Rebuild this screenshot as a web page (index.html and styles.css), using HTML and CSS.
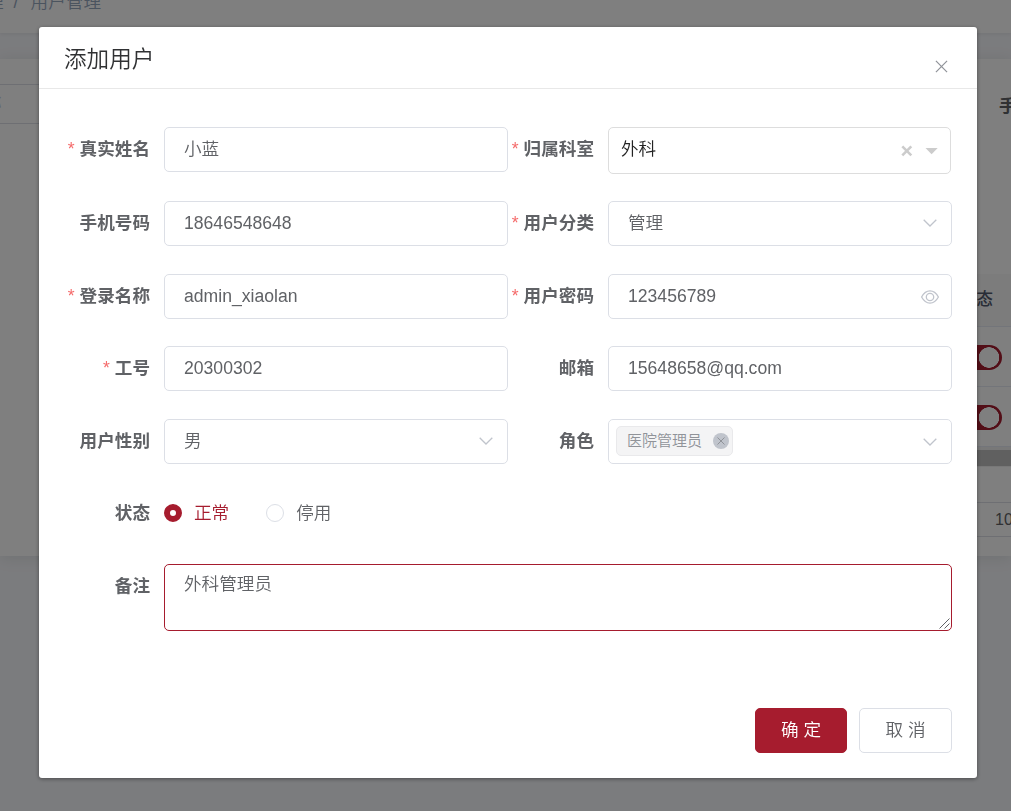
FILE: index.html
```html
<!DOCTYPE html>
<html lang="zh-CN">
<head>
<meta charset="utf-8">
<title>添加用户</title>
<link rel="stylesheet" href="styles.css">
</head>
<body>
<div class="page">
  <header class="navbar"><span class="crumb">理</span><span class="sep">/</span><span class="crumb">用户管理</span></header>
  <main class="card">
    <aside class="tree"><div class="tree-search">称</div></aside>
    <section class="list">
      <div class="filter">手机号码</div>
      <div class="thead">状态</div>
      <div class="trow"><span class="switch"></span></div>
      <div class="trow"><span class="switch"></span></div>
      <div class="scroll"></div>
      <div class="pager"><span class="size">10条/页</span></div>
    </section>
  </main>
</div>
<div class="mask">
  <div class="dialog">
    <div class="dialog-head">
      <h1 class="title">添加用户</h1>
      <svg class="close" viewBox="0 0 14 14"><path d="M1 1l12 12M13 1L1 13"/></svg>
    </div>
    <form class="form">
      <label class="label req">真实姓名</label>
      <div class="input">小蓝</div>
      <label class="label req">归属科室</label>
      <div class="input tree-select">外科
        <svg class="tree-icons" viewBox="0 0 40 14"><path class="x" d="M4.300 2.300l9 9M13.300 2.300l-9 9"/><path class="arrow" d="M27.500 4h12.200l-6.100 6.200z"/></svg>
      </div>

      <label class="label">手机号码</label>
      <div class="input">18646548648</div>
      <label class="label req">用户分类</label>
      <div class="input">管理<svg class="chev" viewBox="0 0 14 8"><path d="M.7.8L7 7l6.300-6.200"/></svg></div>

      <label class="label req">登录名称</label>
      <div class="input">admin_xiaolan</div>
      <label class="label req">用户密码</label>
      <div class="input">123456789<svg class="eye" viewBox="0 0 18 14"><path d="M.6 7C5-1.100 13-1.100 17.400 7 13 15.100 5 15.100.6 7z"/><circle cx="9" cy="7" r="3.700"/></svg></div>

      <label class="label req">工号</label>
      <div class="input">20300302</div>
      <label class="label">邮箱</label>
      <div class="input">15648658@qq.com</div>

      <label class="label">用户性别</label>
      <div class="input">男<svg class="chev" viewBox="0 0 14 8"><path d="M.7.8L7 7l6.300-6.200"/></svg></div>
      <label class="label">角色</label>
      <div class="input multi">
        <span class="tag">医院管理员<svg class="tag-x" viewBox="0 0 16 16"><circle cx="8" cy="8" r="8"/><path d="M4.500 4.500l7 7M11.500 4.500l-7 7"/></svg></span>
        <svg class="chev" viewBox="0 0 14 8"><path d="M.7.8L7 7l6.300-6.200"/></svg>
      </div>

      <label class="label">状态</label>
      <div class="radios">
        <span class="radio on"><i class="dot"></i>正常</span>
        <span class="radio"><i class="dot"></i>停用</span>
      </div>

      <label class="label">备注</label>
      <div class="area">外科管理员<svg class="grip" viewBox="0 0 11 11"><path d="M.5 10.500l10-10M5.500 10.500l5-5"/></svg></div>
    </form>
    <div class="foot">
      <button class="btn primary">确 定</button>
      <button class="btn">取 消</button>
    </div>
  </div>
</div>
</body>
</html>
```
FILE: styles.css
```css
* { box-sizing: border-box; }
body {
  margin: 0;
  width: 1011px;
  height: 811px;
  overflow: hidden;
  background: #f7f8fc;
  color: #606266;
  font: 350 17.6px/26px "Liberation Sans", "Noto Sans CJK SC", sans-serif;
}
.page { height: 811px; overflow: hidden; }

.navbar {
  display: flex;
  height: 33px;
  background: #fff;
  box-shadow: 0 1px 4px rgba(0, 21, 41, .08);
  color: #97a8be;
  line-height: 4px;
}
.crumb:first-child { margin-left: -14px; }
.sep { width: 27px; padding-left: 10px; }

.card {
  display: flex;
  justify-content: space-between;
  height: 497px;
  margin-top: 26px;
  background: #fff;
  box-shadow: 0 2px 15px rgba(0, 40, 20, .1);
}
.tree { width: 60px; padding-top: 25px; }
.tree-search {
  height: 40px;
  border: solid #dcdfe6;
  border-width: 1px 0;
  color: #c0c4cc;
  line-height: 37px;
  text-indent: -16px;
}
.list { width: 51px; overflow: hidden; white-space: nowrap; }
.filter {
  height: 215px;
  padding: 34px 0 0 39px;
  font-weight: 700;
}
.thead {
  height: 53px;
  background: #f8f8f9;
  border-bottom: 1px solid #e6ebf5;
  color: #515a6e;
  font-weight: 500;
  line-height: 51px;
  font-size: 16.500px;
}
.trow {
  display: flex;
  align-items: center;
  height: 60px;
  padding-top: 2px;
  border-bottom: 1px solid #e6ebf5;
}
.switch {
  width: 42px;
  height: 25px;
  border-radius: 13px;
  background: radial-gradient(circle at 29px 50%, #fff 10px, #a61c2e 10.500px);
}
.scroll {
  height: 20px;
  border: solid #f0f0f0;
  border-width: 3px 0 1px;
  background: #c1c1c1;
}
.pager { padding-top: 35px; }
.size {
  display: block;
  height: 35px;
  padding-left: 35px;
  border: solid #dcdfe6;
  border-width: 1px 0;
  font-size: 16px;
  line-height: 33px;
}

.mask {
  position: fixed;
  inset: 0;
  padding: 27px 34px 0 39px;
  background: rgba(0, 0, 0, .5);
}
.dialog {
  height: 751px;
  border-radius: 3px;
  background: #fff;
  box-shadow: 0 1px 4px rgba(0, 0, 0, .4);
}
.dialog-head {
  display: flex;
  justify-content: space-between;
  height: 62px;
  padding: 18px 29px 0 25px;
  border-bottom: 1px solid #e8e8e8;
}
.title {
  margin: 0;
  color: #303133;
  font-size: 22.600px;
  font-weight: 350;
  line-height: 30px;
}
.close {
  width: 13px;
  height: 13px;
  margin-top: 15px;
  stroke: #909399;
  stroke-width: 1.300;
}

.form {
  display: grid;
  grid-template-columns: 111px 14px 344px 86px 14px 344px;
  grid-template-rows: 74px 73px 72px 73px 72px 73px 67px;
  align-items: start;
  justify-content: start;
  height: 581px;
  padding-top: 38px;
}
.label {
  font-weight: 700;
  line-height: 44px;
  text-align: right;
  white-space: nowrap;
}
.label + * { grid-column: span 2; margin-left: 14px; }
.req::before {
  content: "*";
  margin-right: 5px;
  color: #f56c6c;
  font-weight: 400;
}
.input, .area {
  position: relative;
  border: 1px solid #dcdfe6;
  border-radius: 5px;
}
.input {
  display: flex;
  align-items: center;
  height: 45px;
  padding: 0 14px 2px 19px;
}
.tree-select {
  height: 47px;
  width: 343px;
  padding: 0 13px 3px 12px;
  border-color: #ddd;
  color: #222;
}
.chev {
  width: 14px;
  height: 8px;
  margin: 1px 0 0 auto;
  fill: none;
  stroke: #c0c4cc;
  stroke-width: 1.300;
}
.tree-icons {
  width: 40px;
  height: 14px;
  margin: 3px -1px 0 auto;
  fill: #ccc;
}
.x { stroke: #ccc; stroke-width: 2.600; }
.eye {
  width: 18px;
  height: 14px;
  margin: 2px -2px 0 auto;
  fill: none;
  stroke: #c0c4cc;
  stroke-width: 1.300;
}
.multi { padding-left: 7px; padding-bottom: 1px; }
.tag {
  display: flex;
  align-items: center;
  height: 30px;
  padding: 0 3px 0 10px;
  border: 1px solid #e9e9eb;
  border-radius: 5px;
  background: #f4f4f5;
  color: #909399;
  font-size: 15px;
}
.tag-x {
  width: 16px;
  height: 16px;
  margin: 0 0 0 11px;
  fill: #c0c4cc;
  stroke: #909399;
}
.tag-x circle { stroke: none; }
.label + .radios, .label + .area { grid-column: 2 / -1; }
.radios { display: flex; gap: 37px; height: 44px; }
.radio { display: flex; align-items: center; gap: 12px; }
.dot {
  width: 18px;
  height: 18px;
  border: 1px solid #dcdfe6;
  border-radius: 50%;
}
.on { color: #a61c2e; }
.on .dot { border: 6.500px solid #a61c2e; }
.area {
  height: 67px;
  padding: 6px 19px;
  border-color: #a61c2e;
}
.grip {
  position: absolute;
  right: 1px;
  bottom: 1px;
  width: 11px;
  height: 11px;
  stroke: #606266;
}
.foot {
  display: flex;
  justify-content: flex-end;
  gap: 12px;
  padding: 38px 25px 0 0;
}
.btn {
  width: 93px;
  height: 45px;
  padding: 0 0 2px;
  border: 1px solid #dcdfe6;
  border-radius: 5px;
  background: #fff;
  color: #606266;
  font: inherit;
}
.primary {
  width: 92px;
  border-color: #a61c2e;
  background: #a61c2e;
  color: #fff;
}
```
